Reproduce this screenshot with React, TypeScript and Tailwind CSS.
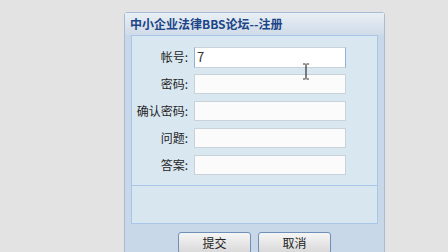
import React from "react";

const rows = [
  { label: "帐号:", value: "7", focus: true },
  { label: "密码:", value: "" },
  { label: "确认密码:", value: "" },
  { label: "问题:", value: "" },
  { label: "答案:", value: "" },
];

export default function App() {
  return (
    <div
      className="relative w-[448px] h-[252px] overflow-hidden bg-[#e3e3e3] pl-[124px] pt-[12px]"
      style={{ fontFamily: '"Noto Sans CJK SC", "Liberation Sans", sans-serif' }}
    >
      <div className="flex h-[250px] w-[261px] flex-col rounded-t-[3px] border border-[#a9bbd3] bg-[#c8d8e9]">
        <div className="flex h-[22px] items-center bg-gradient-to-b from-[#e9eff5] to-[#cfdbe8] pl-[5px] text-[12px] font-bold leading-none text-[#1b4588]">
          中小企业法律BBS论坛--注册
        </div>
        <div className="px-[6px]">
          <div className="flex h-[151px] flex-col gap-[7px] border border-[#a9c5e8] bg-[#d9e7f1] pt-[11px]">
            {rows.map((r) => (
              <div key={r.label} className="flex h-[20px] items-center">
                <div className="w-[56px] text-right text-[12px] leading-none text-[#262626]">{r.label}</div>
                <div
                  className={
                    r.focus
                      ? "ml-[6px] flex h-[21px] w-[152px] items-center border border-[#c9d1da] border-l-[#8fb1de] border-r-[#8fb1de] bg-white pl-[2px] text-[13px] text-[#333]"
                      : "ml-[6px] flex h-[20px] w-[152px] items-center border border-[#c9d1da] bg-[#fbfbfb] pl-[2px] text-[13px] text-[#333]"
                  }
                >
                  {r.value}
                </div>
              </div>
            ))}
          </div>
          <div className="h-[38px] border border-t-0 border-[#a9c5e8] bg-[#d8e6f0]" />
        </div>
        <div className="flex justify-center gap-[7px] pt-[8px]">
          <button className="h-[22px] w-[73px] rounded-[3px] border border-[#6f8fb8] bg-gradient-to-b from-[#f6f6f6] to-[#d8d8d8] text-[12px] leading-none text-[#222]">
            提交
          </button>
          <button className="h-[22px] w-[73px] rounded-[3px] border border-[#6f8fb8] bg-gradient-to-b from-[#f6f6f6] to-[#d8d8d8] text-[12px] leading-none text-[#222]">
            取消
          </button>
        </div>
      </div>
      <svg className="absolute left-[302px] top-[63px]" width="8" height="17" viewBox="0 0 8 17">
        <path d="M1 1h2.5M4.5 1H7M4 1.5v14M1 16h2.5M4.5 16H7" stroke="#333" strokeWidth="1.2" fill="none" />
      </svg>
    </div>
  );
}
